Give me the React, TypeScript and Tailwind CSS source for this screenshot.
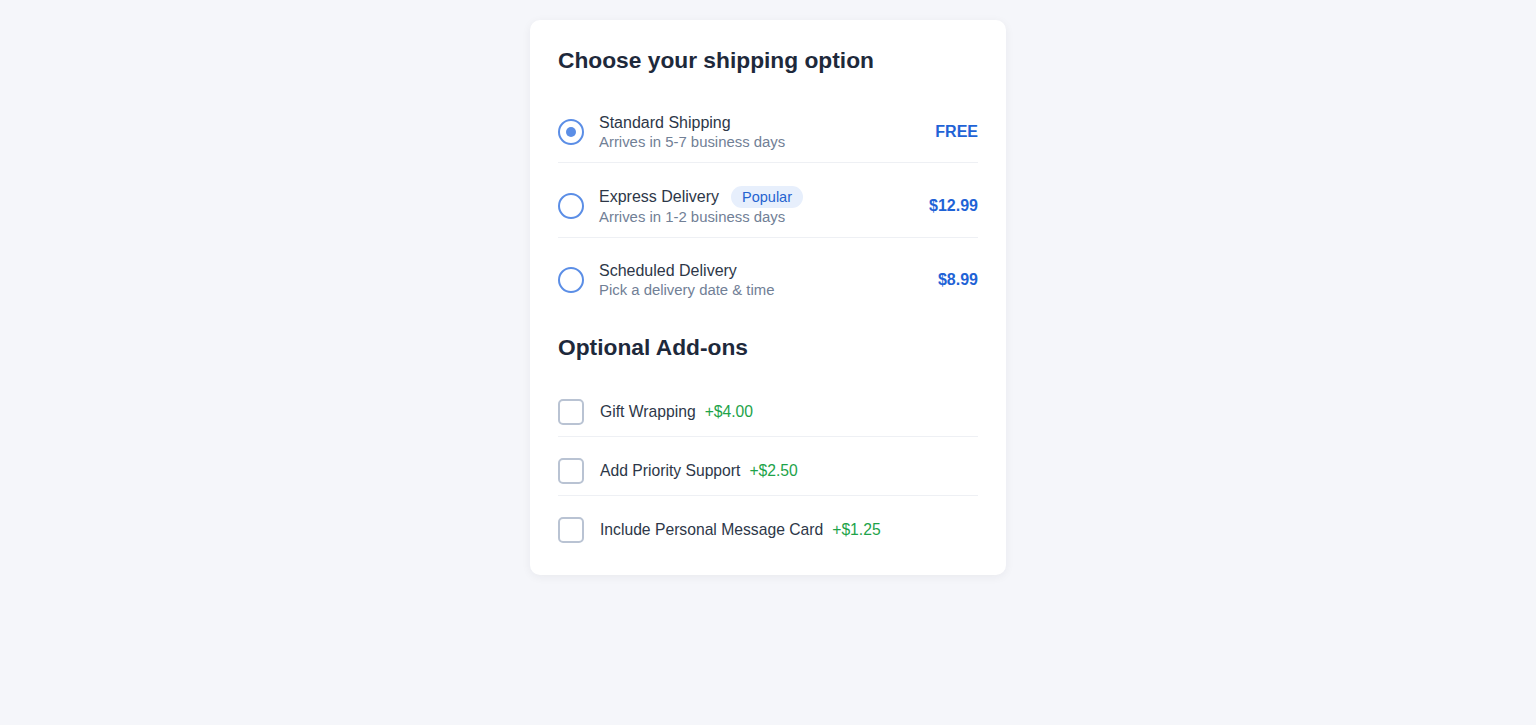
import * as React from "react";

type Option = { id: string; name: string; sub: string; price: string; badge?: string };

const SHIPPING: Option[] = [
  { id: "standard", name: "Standard Shipping", sub: "Arrives in 5-7 business days", price: "FREE" },
  { id: "express", name: "Express Delivery", sub: "Arrives in 1-2 business days", price: "$12.99", badge: "Popular" },
  { id: "scheduled", name: "Scheduled Delivery", sub: "Pick a delivery date & time", price: "$8.99" },
];

const ADDONS = [
  { id: "gift", label: "Gift Wrapping", price: "+$4.00" },
  { id: "support", label: "Add Priority Support", price: "+$2.50" },
  { id: "card", label: "Include Personal Message Card", price: "+$1.25" },
];

export default function App() {
  const [selected, setSelected] = React.useState("standard");
  const [addons, setAddons] = React.useState<Record<string, boolean>>({});

  return (
    <div className="min-h-screen bg-[#f5f6fa] pt-5 font-['Liberation_Sans',Arial,sans-serif]">
      <div className="mx-auto w-[476px] rounded-[10px] bg-white px-7 pb-[21px] pt-7 shadow-[0_2px_10px_rgba(30,41,59,0.06)]">
        <h2 className="mb-[30px] text-[22.75px] font-bold leading-6 text-[#1e293b]">Choose your shipping option</h2>

        <div className="flex flex-col">
          {SHIPPING.map((opt, i) => {
            const last = i === SHIPPING.length - 1;
            const active = selected === opt.id;
            return (
              <label
                key={opt.id}
                onClick={() => setSelected(opt.id)}
                className={
                  "flex cursor-pointer items-center justify-between py-[11px] " +
                  (last ? "" : "mb-3 border-b border-[#eef0f4]")
                }
              >
                <div className="flex items-center gap-[15px]">
                  <span className="flex h-[26px] w-[26px] items-center justify-center rounded-full border-2 border-[#5b8ee6]">
                    {active && <span className="h-[10px] w-[10px] rounded-full bg-[#5b8ee6]" />}
                  </span>
                  <div className="flex flex-col">
                    <div className="flex items-center">
                      <span className="text-[16px] leading-5 text-[#2d3748]">{opt.name}</span>
                      {opt.badge && (
                        <span className="ml-3 rounded-full bg-[#e7effc] px-[11px] text-[14.5px] leading-[22px] text-[#2563d0]">
                          {opt.badge}
                        </span>
                      )}
                    </div>
                    <span className="text-[14.9px] leading-[18px] text-[#718096]">{opt.sub}</span>
                  </div>
                </div>
                <span className="text-[16px] font-bold text-[#1f63d6]">{opt.price}</span>
              </label>
            );
          })}
        </div>

        <h2 className="mb-[29px] mt-[25px] text-[22.75px] font-bold leading-6 text-[#1e293b]">Optional Add-ons</h2>

        <div className="flex flex-col">
          {ADDONS.map((a, i) => {
            const last = i === ADDONS.length - 1;
            return (
              <label
                key={a.id}
                onClick={() => setAddons((s) => ({ ...s, [a.id]: !s[a.id] }))}
                className={
                  "flex cursor-pointer items-center gap-4 py-[11px] " +
                  (last ? "" : "mb-[10px] border-b border-[#eef0f4]")
                }
              >
                <span className="h-[26px] w-[26px] rounded-[5px] border-2 border-[#b9c3d3]" />
                <span className="text-[15.7px] text-[#2d3748]">
                  {a.label}
                  <span className="ml-[9px] text-[#1ea34a]">{a.price}</span>
                </span>
              </label>
            );
          })}
        </div>
      </div>
    </div>
  );
}
